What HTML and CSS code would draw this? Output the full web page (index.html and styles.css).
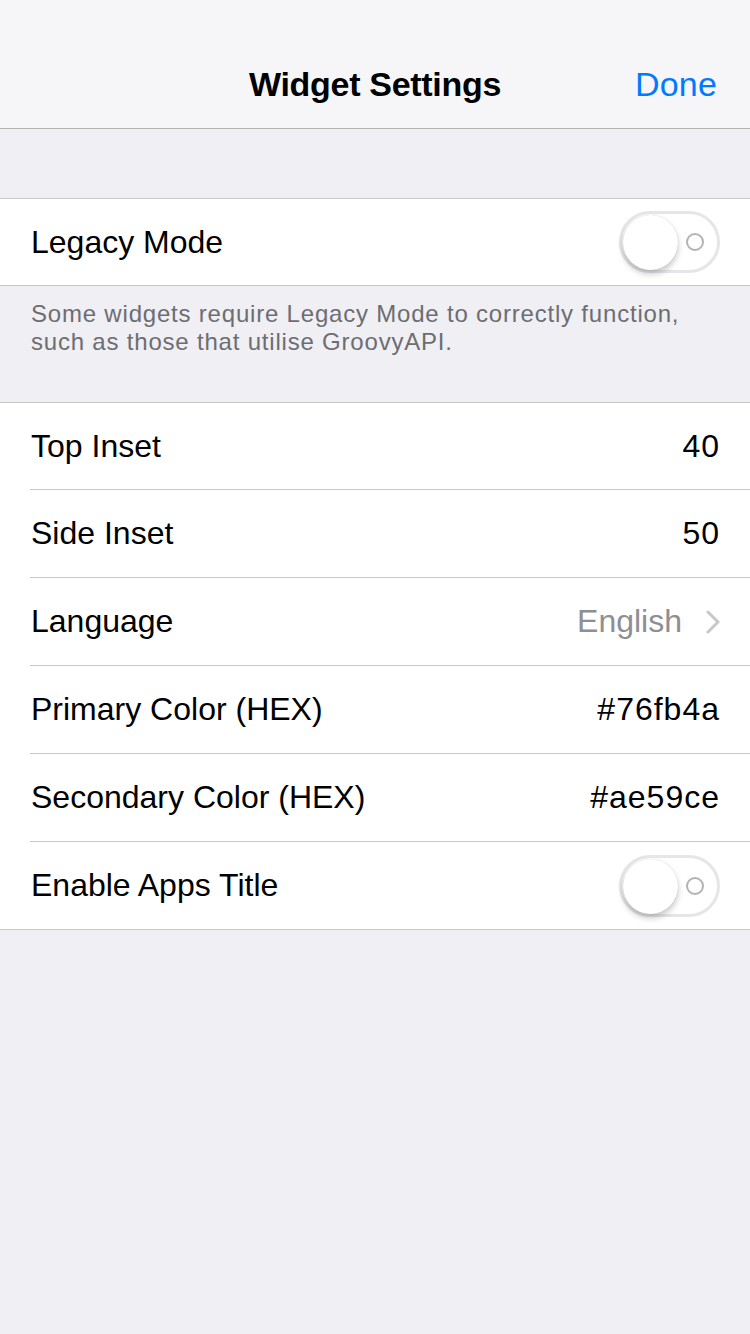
FILE: index.html
```html
<!DOCTYPE html>
<html>
<head>
<meta charset="utf-8">
<link rel="stylesheet" href="styles.css">
</head>
<body>
<div class="app">
  <header class="navbar">
    <div class="nav-title">Widget Settings</div>
    <div class="nav-done">Done</div>
  </header>

  <div class="gap-top"></div>

  <section class="group single">
    <div class="row">
      <div class="label">Legacy Mode</div>
      <div class="toggle"><div class="knob"></div><div class="ring"></div></div>
    </div>
  </section>
  <div class="footer-note">Some widgets require Legacy Mode to correctly function, such as those that utilise GroovyAPI.</div>

  <section class="group">
    <div class="row">
      <div class="label">Top Inset</div>
      <div class="value">40</div>
    </div>
    <div class="row">
      <div class="label">Side Inset</div>
      <div class="value">50</div>
    </div>
    <div class="row">
      <div class="label">Language</div>
      <div class="value muted">English
        <svg class="chev" width="14" height="24" viewBox="0 0 14 24"><path d="M2 2 L12 12 L2 22" fill="none" stroke="#c7c7cc" stroke-width="3" stroke-linecap="round" stroke-linejoin="round"/></svg>
      </div>
    </div>
    <div class="row">
      <div class="label">Primary Color (HEX)</div>
      <div class="value">#76fb4a</div>
    </div>
    <div class="row">
      <div class="label">Secondary Color (HEX)</div>
      <div class="value">#ae59ce</div>
    </div>
    <div class="row">
      <div class="label">Enable Apps Title</div>
      <div class="toggle"><div class="knob"></div><div class="ring"></div></div>
    </div>
  </section>
</div>
</body>
</html>
```

FILE: styles.css
```css
* { box-sizing: border-box; }
html, body {
  margin: 0;
  padding: 0;
  background: #efeff4;
  font-family: "Liberation Sans", Arial, sans-serif;
  -webkit-font-smoothing: antialiased;
}
.app {
  width: 750px;
  min-height: 1334px;
  background: #efeff4;
}
.navbar {
  height: 129px;
  background: #f6f6f8;
  border-bottom: 1px solid #b2b2b2;
  position: relative;
  display: flex;
  align-items: flex-end;
  justify-content: center;
  padding-bottom: 24px;
}
.nav-title {
  font-size: 34px;
  font-weight: bold;
  color: #000;
  letter-spacing: -0.3px;
}
.nav-done {
  position: absolute;
  right: 33px;
  bottom: 24px;
  font-size: 34px;
  color: #007aff;
  letter-spacing: 0.2px;
}
.gap-top { height: 69px; }
.group {
  background: #fff;
  border-top: 1px solid #c8c7cc;
  border-bottom: 1px solid #c8c7cc;
}
.row {
  height: 88px;
  margin-left: 30px;
  padding-right: 31px;
  display: flex;
  align-items: center;
  justify-content: space-between;
  border-bottom: 1px solid #c8c7cc;
}
.row:first-child { height: 87px; }
.row:last-child { border-bottom: none; height: 87px; }
.group.single .row { height: 86px; }
.label {
  font-size: 32px;
  color: #000;
  padding-left: 1px;
}
.value {
  font-size: 32px;
  color: #000;
  display: flex;
  align-items: center;
  letter-spacing: 1px;
  margin-right: -1px;
}
.value.muted { color: #8e8e93; letter-spacing: 0; margin-right: 0; }
.chev { margin-left: 24px; margin-right: -1px; }
.footer-note {
  padding: 14px 30px 0 31px;
  height: 116px;
  font-size: 24px;
  line-height: 28px;
  letter-spacing: 0.8px;
  color: #6d6d72;
}
.toggle {
  position: relative;
  width: 101px;
  height: 62px;
  border-radius: 31px;
  border: 3px solid #e6e6e6;
  background: #fff;
  margin-right: -1px;
}
.knob {
  position: absolute;
  left: 1px;
  top: 1px;
  width: 55px;
  height: 55px;
  border-radius: 50%;
  background: #fff;
  box-shadow: 0 4px 6px rgba(0,0,0,0.22), 0 0 1px rgba(0,0,0,0.2);
}
.ring {
  position: absolute;
  right: 13px;
  top: 19px;
  width: 18px;
  height: 18px;
  border-radius: 50%;
  border: 2px solid #b3b3b3;
}
```
